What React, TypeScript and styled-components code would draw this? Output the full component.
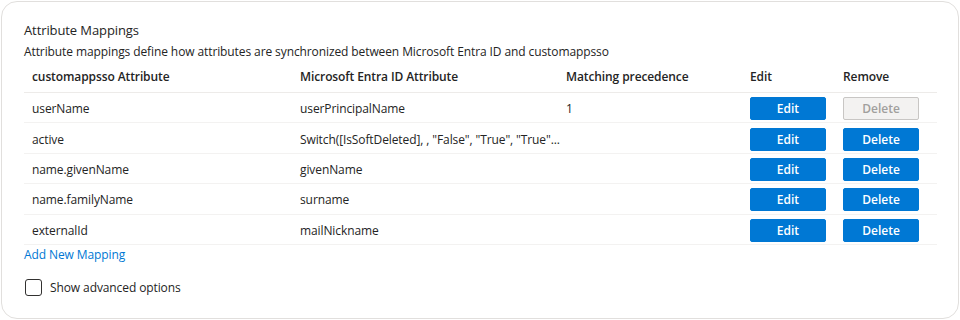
import styled, { createGlobalStyle } from "styled-components";

const GlobalStyle = createGlobalStyle`
  * {
    box-sizing: border-box;
  }
  body {
    margin: 0;
    padding: 1px;
    background: #ffffff;
    font-family: "Segoe UI", "Open Sans", "Noto Sans", sans-serif;
    color: #242424;
  }
`;

interface Mapping {
  target: string;
  source: string;
  precedence?: string;
  canDelete: boolean;
}

const mappings: Mapping[] = [
  { target: "userName", source: "userPrincipalName", precedence: "1", canDelete: false },
  { target: "active", source: 'Switch([IsSoftDeleted], , "False", "True", "True"...', canDelete: true },
  { target: "name.givenName", source: "givenName", canDelete: true },
  { target: "name.familyName", source: "surname", canDelete: true },
  { target: "externalId", source: "mailNickname", canDelete: true },
];

function App() {
  return (
    <>
      <GlobalStyle />
      <Card>
        <Title>Attribute Mappings</Title>
        <Description>
          Attribute mappings define how attributes are synchronized between Microsoft Entra ID and customappsso
        </Description>
        <Table>
          <HeaderRow>
            <HeadCell>customappsso Attribute</HeadCell>
            <HeadCell>Microsoft Entra ID Attribute</HeadCell>
            <HeadCell>Matching precedence</HeadCell>
            <HeadCell>Edit</HeadCell>
            <HeadCell>Remove</HeadCell>
          </HeaderRow>
          {mappings.map((m) => (
            <Row key={m.target}>
              <Cell>{m.target}</Cell>
              <Cell>{m.source}</Cell>
              <Cell>{m.precedence}</Cell>
              <Cell>
                <ActionButton>Edit</ActionButton>
              </Cell>
              <Cell>
                <ActionButton disabled={!m.canDelete}>Delete</ActionButton>
              </Cell>
            </Row>
          ))}
        </Table>
        <AddLink href="#">Add New Mapping</AddLink>
        <CheckRow>
          <CheckBox type="checkbox" />
          <span>Show advanced options</span>
        </CheckRow>
      </Card>
    </>
  );
}

const Card = styled.div`
  width: 958px;
  height: 318px;
  border: 1px solid #e1dfdd;
  border-radius: 16px;
  padding: 18px 21px 0 22px;
  display: flex;
  flex-direction: column;
  font-size: 12px;
  letter-spacing: -0.1px;
`;

const Title = styled.div`
  font-size: 13px;
  line-height: 20px;
`;

const Description = styled.div`
  line-height: 20px;
  margin-top: 2px;
`;

const Table = styled.div`
  display: flex;
  flex-direction: column;
`;

const gridCols = "268px 266px 184px 93px 101px";

const HeaderRow = styled.div`
  display: grid;
  grid-template-columns: ${gridCols};
  height: 31px;
  align-items: center;
  border-bottom: 1px solid #edebe9;
`;

const Row = styled.div`
  display: grid;
  grid-template-columns: ${gridCols};
  height: 30.4px;
  padding-top: 1px;
  align-items: center;
  border-bottom: 1px solid #f3f2f1;
`;

const HeadCell = styled.div`
  padding-left: 8px;
  font-weight: 600;
  line-height: 20px;
`;

const Cell = styled.div`
  padding: 2px 0 0 8px;
  line-height: 20px;
  white-space: nowrap;
`;

const ActionButton = styled.button`
  display: block;
  width: 76px;
  height: 23px;
  margin-top: -1px;
  border-radius: 2px;
  border: 1px solid #0078d4;
  background: #0078d4;
  color: #ffffff;
  font-family: inherit;
  font-size: 12px;
  font-weight: 600;
  padding: 0;
  cursor: pointer;

  &:disabled {
    background: #f3f2f1;
    border-color: #c8c6c4;
    color: #a19f9d;
    cursor: default;
  }
`;

const AddLink = styled.a`
  line-height: 20px;
  color: #0078d4;
  text-decoration: none;
  align-self: flex-start;
`;

const CheckRow = styled.label`
  display: flex;
  align-items: center;
  gap: 8px;
  margin-top: 13px;
  line-height: 20px;
`;

const CheckBox = styled.input`
  appearance: none;
  margin: 0 0 0 1px;
  width: 17px;
  height: 17px;
  border: 1px solid #323130;
  border-radius: 3px;
  background: #ffffff;
`;

export default App;
